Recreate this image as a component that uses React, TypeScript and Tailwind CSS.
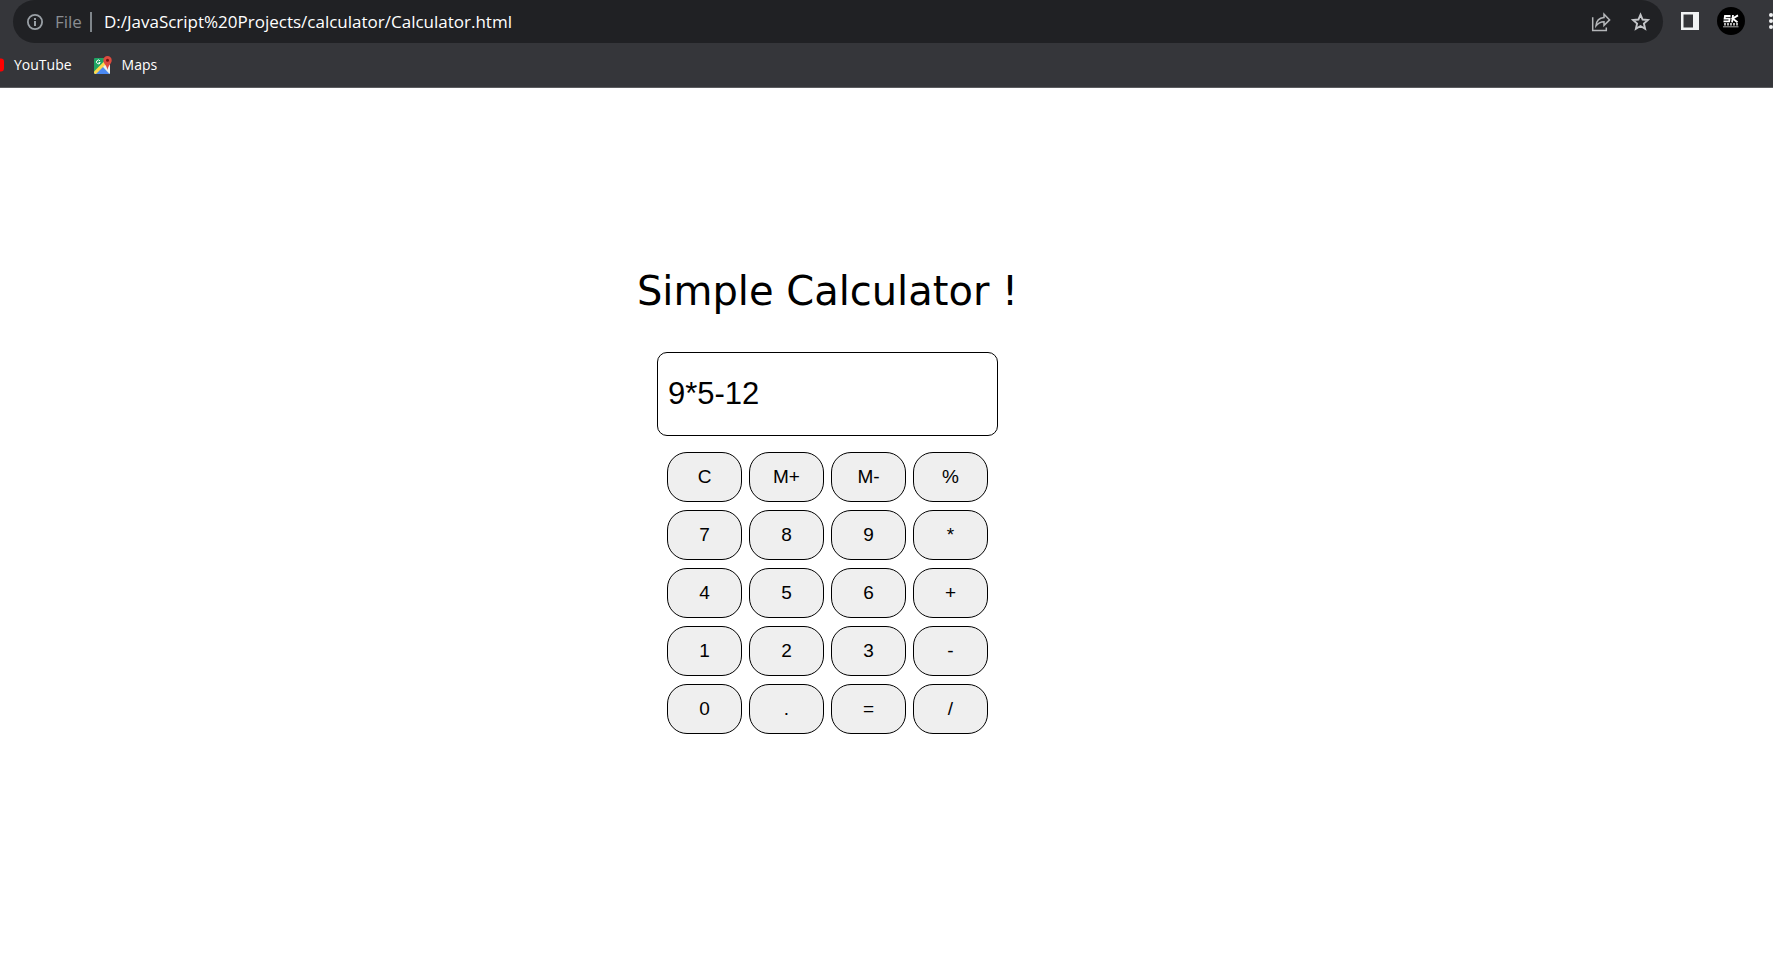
import { useState } from "react";

const keys = [
  "C", "M+", "M-", "%",
  "7", "8", "9", "*",
  "4", "5", "6", "+",
  "1", "2", "3", "-",
  "0", ".", "=", "/",
];

function MapsIcon() {
  return (
    <svg viewBox="0 0 18 18" className="h-[18px] w-[18px]" aria-hidden="true">
      <clipPath id="map-tile">
        <rect x="0" y="2" width="16" height="16" rx="1" />
      </clipPath>
      <g clipPath="url(#map-tile)">
        <rect x="0" y="1" width="17" height="17" fill="#1fa463" />
        <path d="M0 18 L8 10 L16 18 Z" fill="#4a89f3" />
        <path d="M8 10 L12 6 L17 9 V18 H15.5 Z" fill="#eceff1" />
        <path d="M-1 16.5 L11 4.5 L13.5 6.5 L1.5 18.5 Z" fill="#ffd84d" />
      </g>
      <path d="M6 4.9 A1.9 1.9 0 1 0 6.2 6.6 H4.6" fill="none" stroke="#fff" strokeWidth="1" />
      <path d="M13.5 0 A4.2 4.2 0 0 0 9.3 4.2 C9.3 7.8 12.6 8.4 13.5 14 C14.4 8.4 17.7 7.8 17.7 4.2 A4.2 4.2 0 0 0 13.5 0 Z" fill="#dd4b3e" />
      <circle cx="13.5" cy="4.2" r="1.5" fill="#781411" />
    </svg>
  );
}

function BrowserBar() {
  return (
    <header className="border-b border-[#5c5d60] bg-[#35363a] font-['Open_Sans',sans-serif] text-white">
      <div className="flex h-[43px]">
        <div className="ml-[13px] flex min-w-0 flex-1 items-center rounded-full bg-[#202124] pr-3 pl-3.5">
          <svg viewBox="0 0 16 16" className="h-4 w-4 shrink-0" aria-hidden="true">
            <circle cx="8" cy="8" r="7.1" fill="none" stroke="#9aa0a6" strokeWidth="1.8" />
            <path d="M7 7 H9 V12 H7 Z M7 4 H9 V6 H7 Z" fill="#9aa0a6" />
          </svg>
          <span className="ml-3 text-[17px] text-[#8a8d91]">File</span>
          <span className="ml-2 h-5 w-0.5 shrink-0 bg-[#80868b]" />
          <span className="ml-3 flex-1 truncate text-[17px]">
            D:/JavaScript%20Projects/calculator/Calculator.html
          </span>
          <button type="button" aria-label="Share this page" className="mr-5">
            <svg viewBox="0 0 20 20" className="h-5 w-5" fill="none" stroke="#b4b6b9" strokeWidth="1.5" aria-hidden="true">
              <path d="M1.7 5.2 V18.4 H15.3 V15.5" />
              <path d="M5 13.8 C5.4 8.7 8.4 6 13 5.6 V2.2 L18.6 7.9 L13 13.4 V9.8 C9.4 9.9 7 11.2 5 13.8 Z" />
            </svg>
          </button>
          <button type="button" aria-label="Bookmark this page">
            <svg viewBox="0 0 20 20" className="h-5 w-5" fill="none" stroke="#c4c6c9" strokeWidth="1.9" aria-hidden="true">
              <path d="M9.5 2.6 L11.6 7.5 L16.9 8 L12.9 11.5 L14.1 16.8 L9.5 14 L4.9 16.8 L6.1 11.5 L2.1 8 L7.4 7.5 Z" />
            </svg>
          </button>
        </div>
        <div className="flex items-center pb-px">
          <button type="button" aria-label="Side panel" className="ml-[18px]">
            <svg viewBox="0 0 18 18" className="h-[18px] w-[18px]" aria-hidden="true">
              <path fillRule="evenodd" d="M0 0 H18 V18 H0 Z M2.5 2.5 V15.5 H12 V2.5 Z" fill="#f1f3f4" />
            </svg>
          </button>
          <button type="button" aria-label="Profile" className="ml-[18px] grid h-7 w-7 place-items-center rounded-full bg-black">
            <svg viewBox="0 0 28 28" className="h-7 w-7" aria-hidden="true">
              <g fill="none" stroke="#fff" strokeWidth="1.8">
                <path d="M13.5 9 H8 L7.6 11.6 H12.6 L12.2 14.4 H6.5" />
                <path d="M16 8 L15 15.4 M21 8.4 L15.5 11.6 L20.5 15.2" />
              </g>
              <path d="M7 17.3 H21" stroke="#b5b5b5" strokeWidth="2.6" strokeDasharray="2 1" />
              <path d="M6 19.8 H21.5" stroke="#aaa" strokeWidth="1" />
            </svg>
          </button>
          <button type="button" aria-label="Browser menu" className="ml-6 w-1">
            <svg viewBox="0 0 4 18" className="h-[18px] w-1" fill="#f1f3f4" aria-hidden="true">
              <circle cx="2" cy="3" r="2" />
              <circle cx="2" cy="9" r="2" />
              <circle cx="2" cy="15" r="2" />
            </svg>
          </button>
        </div>
      </div>
      <nav aria-label="Bookmarks" className="flex h-11 items-center text-sm">
        <a href="#youtube" className="flex items-center gap-2.5">
          <svg viewBox="0 0 4 14" className="h-3.5 w-1" aria-hidden="true">
            <path d="M0 0.5 H1 Q4 0.5 4 3.5 V10 Q4 13.5 1 13.5 H0 Z" fill="#f00" />
          </svg>
          YouTube
        </a>
        <a href="#maps" className="ml-[22px] flex items-center gap-2.5">
          <MapsIcon />
          Maps
        </a>
      </nav>
    </header>
  );
}

export default function App() {
  const [value, setValue] = useState("9*5-12");

  function press(key: string) {
    if (key === "C") setValue("");
    else if (key !== "=" && key !== "M+" && key !== "M-") setValue(value + key);
  }

  return (
    <div className="min-h-screen bg-white text-black">
      <BrowserBar />
      <main className="flex flex-col items-center pt-[178px] pr-[118px] font-['Liberation_Sans',Arial,sans-serif]">
        <h1 className="font-['DejaVu_Sans',Verdana,sans-serif] text-[40px] leading-[50px]">Simple Calculator !</h1>
        <input
          type="text"
          aria-label="Expression"
          value={value}
          onChange={(event) => setValue(event.target.value)}
          className="mt-9 h-[84px] w-[341px] rounded-[10px] border border-black bg-white px-2.5 text-[31px] outline-none"
        />
        <div className="mt-4 grid grid-cols-4 gap-x-[7px] gap-y-2">
          {keys.map((key) => (
            <button
              key={key}
              type="button"
              onClick={() => press(key)}
              className="h-[50px] w-[75px] rounded-[20px] border border-black bg-[#efefef] text-[19px]"
            >
              {key}
            </button>
          ))}
        </div>
      </main>
    </div>
  );
}
